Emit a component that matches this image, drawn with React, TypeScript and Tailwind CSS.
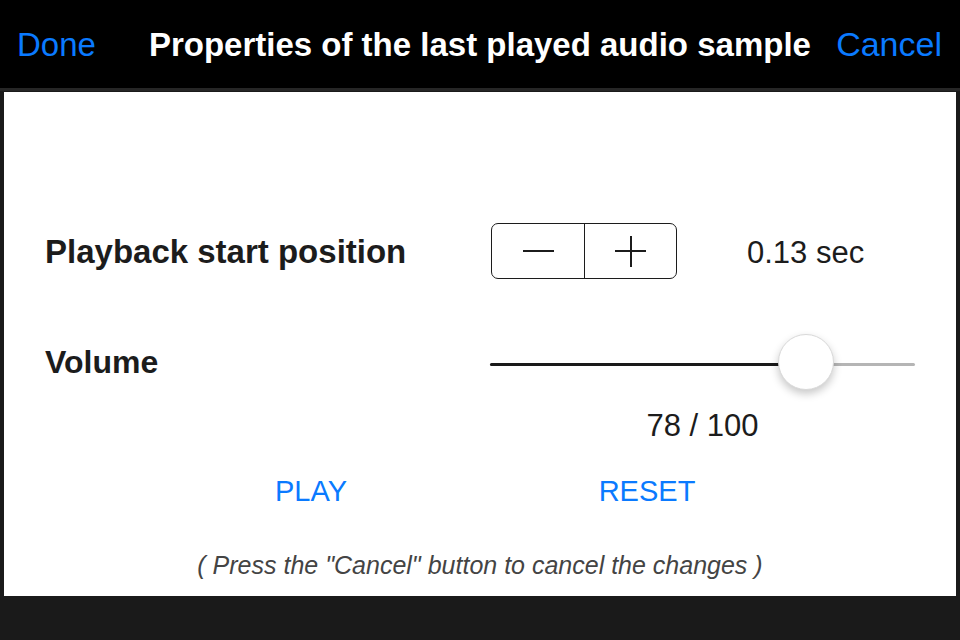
const font = { fontFamily: '"Liberation Sans", Arial, sans-serif' };

const Stepper = () => {
  return (
    <div className="w-[186px] h-[56px] rounded-[7px] border-[1.5px] border-[#1c1c1c] flex shrink-0">
      <button className="w-[93px] h-full flex items-center justify-center border-r-[1.5px] border-[#1c1c1c]">
        <span className="block w-[31px] h-[2px] bg-[#1c1c1c]" />
      </button>
      <button className="flex-1 h-full flex items-center justify-center relative">
        <span className="block w-[31px] h-[2px] bg-[#1c1c1c]" />
        <span className="absolute w-[2px] h-[31px] bg-[#1c1c1c]" />
      </button>
    </div>
  );
};

const Slider = ({ value }: { value: number }) => {
  const thumbLeft = (value / 100) * (425 - 56);
  return (
    <div className="relative w-[425px] h-[56px] shrink-0">
      <div className="absolute left-0 right-0 top-[29px] h-[3px] rounded-full bg-[#b5b5b5]" />
      <div
        className="absolute left-0 top-[29px] h-[3px] rounded-l-full bg-[#1a1a1a]"
        style={{ width: thumbLeft + 28 }}
      />
      <div
        className="absolute top-0 w-[56px] h-[56px] rounded-full bg-white border border-[#d9d9d9] shadow-[0_4px_8px_rgba(0,0,0,0.22)]"
        style={{ left: thumbLeft }}
      />
    </div>
  );
};

export default function App() {
  return (
    <div className="w-[960px] h-[640px] bg-[#1a1a1a] flex flex-col" style={font}>
      <div className="h-[88px] bg-black flex items-center pl-[17px] pr-[18px] border-b-[3px] border-[#262626] box-content">
        <span className="text-[#0a7aff] text-[33px] leading-none">Done</span>
        <span className="text-white font-bold text-[33px] leading-none ml-[53px]">
          Properties of the last played audio sample
        </span>
        <span className="text-[#0a7aff] text-[34px] leading-none ml-auto">Cancel</span>
      </div>
      <div className="px-[4px] pt-[1px]">
        <div className="h-[504px] bg-white flex flex-col text-[#1c1c1c] leading-none">
          <div className="h-[56px] mt-[131px] flex items-center">
            <span className="w-[487px] shrink-0 pl-[41px] font-bold text-[33px]">Playback start position</span>
            <Stepper />
            <span className="ml-[70px] text-[31px] mt-[3px]">0.13 sec</span>
          </div>
          <div className="h-[56px] mt-[55px] flex items-center">
            <span className="w-[486px] shrink-0 pl-[41px] font-bold text-[32px]">Volume</span>
            <Slider value={78} />
          </div>
          <div className="h-[40px] mt-[15px] flex items-center">
            <span className="ml-[486px] w-[425px] text-center text-[31px]">78 / 100</span>
          </div>
          <div className="h-[40px] mt-[26px] flex items-center text-[#0a7aff] text-[29px]">
            <span className="ml-[207px] w-[200px] text-center">PLAY</span>
            <span className="ml-[136px] w-[200px] text-center">RESET</span>
          </div>
          <div className="h-[30px] mt-[39px] flex items-center justify-center italic text-[25px] text-[#444444]">
            ( Press the "Cancel" button to cancel the changes )
          </div>
        </div>
      </div>
    </div>
  );
}
